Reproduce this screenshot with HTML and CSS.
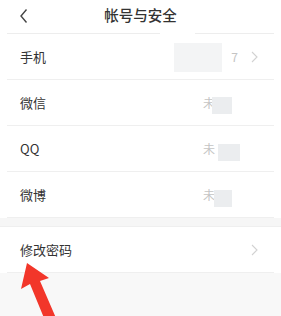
FILE: index.html
```html
<!DOCTYPE html>
<html lang="zh">
<head>
<meta charset="utf-8">
<link rel="stylesheet" href="styles.css">
</head>
<body>
<div class="page">
  <header class="header">
    <svg class="back" width="10" height="16" viewBox="0 0 10 16"><path d="M7.5 1.5 L2 8 L7.5 14.5" fill="none" stroke="#444" stroke-width="1.4"/></svg>
    <div class="title">帐号与安全</div>
    <span></span>
  </header>
  <div class="list">
    <div class="row"><span class="label">手机</span><span class="value">7</span><svg class="chev" width="7" height="12" viewBox="0 0 7 12"><path d="M1 1 L6 6 L1 11" fill="none" stroke="#d2d2d2" stroke-width="1.1"/></svg></div>
    <div class="row"><span class="label">微信</span><span class="value">未</span><span class="chev-space"></span></div>
    <div class="row"><span class="label">QQ</span><span class="value">未</span><span class="chev-space"></span></div>
    <div class="row"><span class="label">微博</span><span class="value">未</span><span class="chev-space"></span></div>
  </div>
  <div class="gap"></div>
  <div class="list">
    <div class="row"><span class="label">修改密码</span><svg class="chev" width="7" height="12" viewBox="0 0 7 12"><path d="M1 1 L6 6 L1 11" fill="none" stroke="#d2d2d2" stroke-width="1.1"/></svg></div>
  </div>
  <div class="rest"></div>

  <div class="patch p1"></div>
  <div class="patch p2"></div>
  <div class="patch p3"></div>
  <div class="patch p4"></div>
  <div class="patch p5"></div>
  <svg class="arrow" width="60" height="60" viewBox="0 0 60 60"><path d="M27 3 L21 29 L30 24 L44 58 L56 58 L40 21 L49 18 Z" fill="#f2362a"/></svg>
</div>
</body>
</html>
```
FILE: styles.css
```css
html, body { margin: 0; padding: 0; }
body {
  font-family: "Noto Sans CJK SC", "Noto Sans", sans-serif;
  color: #333;
  background: #fff;
  width: 281px;
  height: 316px;
  overflow: hidden;
}
.page { position: relative; height: 316px; display: flex; flex-direction: column; }
.header {
  height: 33px;
  display: grid;
  grid-template-columns: 1fr auto 1fr;
  align-items: center;
  margin: 0 7px;
  border-bottom: 1px solid #ededed;
}
.back { margin-left: 12px; margin-top: -1px; }
.title { font-size: 14.5px; font-weight: 500; color: #333; letter-spacing: 0; margin-top: -5px; }
.list { background: #fff; padding: 0 7px; }
.row {
  height: 45px;
  display: flex;
  align-items: center;
  border-bottom: 1px solid #efefef;
  padding: 0 16px 0 13px;
}
.label { font-size: 13px; color: #333; flex: 1; }
.value { font-size: 12px; color: #c4c4c4; margin-right: 36px; }
.row:first-child .value { margin-right: 13px; }
.chev { display: block; }
.chev-space { width: 7px; }
.gap { height: 8px; background: #f6f6f6; border-bottom: 1px solid #efefef; }
.rest { flex: 1; background: #f8f8f8; }
.patch { position: absolute; }
.p1 { left: 174px; top: 43px; width: 48px; height: 29px; background: #f3f4f5; }
.p2 { left: 212px; top: 97px; width: 20px; height: 17px; background: #ebedef; }
.p3 { left: 218px; top: 144px; width: 22px; height: 17px; background: #ebedef; }
.p4 { left: 214px; top: 190px; width: 18px; height: 17px; background: #ebedef; }
.p5 { left: 160px; top: 30px; width: 35px; height: 8px; background: #fff; }
.arrow { position: absolute; left: 0; top: 260px; }
```
